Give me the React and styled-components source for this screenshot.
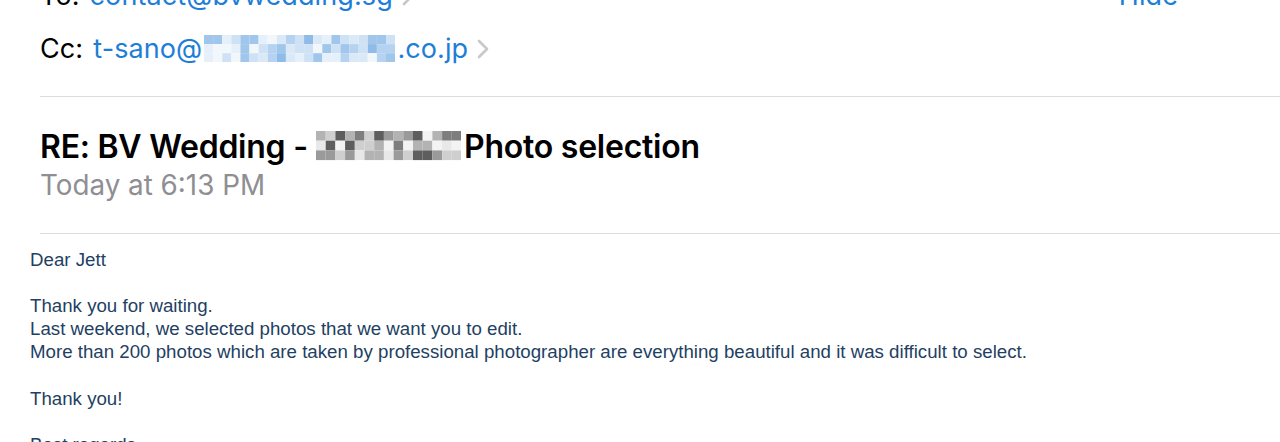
import React from "react";
import styled, { createGlobalStyle } from "styled-components";

const Global = createGlobalStyle`
  html, body { margin: 0; padding: 0; background: #ffffff; overflow: hidden; }
  body { font-family: Inter, "Noto Sans", sans-serif; }
`;

const Page = styled.div`
  width: 1280px;
  height: 442px;
  overflow: hidden;
  background: #fff;
`;

const Header = styled.div`
  margin-top: -31px;
  padding-left: 40px;
`;

const AddrRow = styled.div`
  display: flex;
  align-items: center;
  height: 53px;
  font-size: 27px;
  color: #000;
  letter-spacing: 0.1px;
`;

const Label = styled.span`
  margin-right: 10px;
`;

const Link = styled.span`
  color: #1d7ed8;
  display: inline-flex;
  align-items: center;
`;

const Chevron = styled.svg`
  margin-left: 9px;
  flex: none;
`;

const Hide = styled.span`
  margin-left: auto;
  margin-right: 102px;
  color: #1d7ed8;
`;

const Divider = styled.div`
  height: 1px;
  background: #dcdcdf;
  margin-top: ${(p) => p.$top}px;
`;

const SubjectBlock = styled.div`
  padding-top: 28px;
  padding-bottom: 29px;
`;

const Subject = styled.div`
  display: flex;
  align-items: center;
  font-size: 32px;
  font-weight: 600;
  color: #000;
  height: 42px;
  letter-spacing: -0.25px;
`;

const DateLine = styled.div`
  font-size: 27.8px;
  color: #8e8e93;
  height: 37px;
  line-height: 37px;
`;

const Body = styled.div`
  padding: 14px 0 0 30px;
  font-family: "Liberation Sans", Arial, sans-serif;
  font-size: 18.7px;
  line-height: 23.1px;
  color: #233f63;
`;

const Para = styled.p`
  margin: 0 0 23.1px 0;
`;

function Mosaic({ cols, rows, cell, colors, seed, style }) {
  const rects = [];
  let s = seed;
  for (let r = 0; r < rows; r++) {
    for (let c = 0; c < cols; c++) {
      s = (s * 9301 + 49297) % 233280;
      const idx = Math.floor((s / 233280) * colors.length);
      rects.push(
        <rect key={r + "-" + c} x={c * cell} y={r * cell} width={cell} height={cell} fill={colors[idx]} />
      );
    }
  }
  return (
    <svg width={cols * cell} height={rows * cell} style={style} viewBox={`0 0 ${cols * cell} ${rows * cell}`}>
      {rects}
    </svg>
  );
}

const ChevronIcon = () => (
  <Chevron width="12" height="20" viewBox="0 0 12 20">
    <path d="M2 2 L10 10 L2 18" fill="none" stroke="#c7c7cc" strokeWidth="2.6" strokeLinecap="round" strokeLinejoin="round" />
  </Chevron>
);

export default function App() {
  return (
    <Page>
      <Global />
      <Header>
        <AddrRow>
          <Label>To:</Label>
          <Link>contact@bvwedding.sg</Link>
          <ChevronIcon />
          <Hide>Hide</Hide>
        </AddrRow>
        <AddrRow>
          <Label>Cc:</Label>
          <Link>
            t-sano@
            <Mosaic
              cols={21}
              rows={3}
              cell={9.1}
              seed={7}
              colors={["#e6f0fa", "#cfe2f5", "#b5d3f0", "#a0c6ec", "#dbe9f7", "#8ebbe8", "#f2f7fc"]}
              style={{ margin: "0 2px 0 2px" }}
            />
            .co.jp
          </Link>
          <ChevronIcon />
        </AddrRow>
        <Divider $top={21} />
        <SubjectBlock>
          <Subject>
            RE: BV Wedding -&nbsp;
            <Mosaic
              cols={15}
              rows={3}
              cell={9.7}
              seed={3}
              colors={["#e8e8e8", "#cfcfcf", "#b3b3b3", "#9a9a9a", "#7e7e7e", "#f3f3f3", "#5e5e5e"]}
              style={{ margin: "0 3px 0 0" }}
            />
            Photo selection
          </Subject>
          <DateLine>Today at 6:13 PM</DateLine>
        </SubjectBlock>
        <Divider $top={0} />
      </Header>
      <Body>
        <Para>Dear Jett</Para>
        <Para>
          Thank you for waiting.
          <br />
          Last weekend, we selected photos that we want you to edit.
          <br />
          More than 200 photos which are taken by professional photographer are everything beautiful and it was difficult to select.
        </Para>
        <Para>Thank you!</Para>
        <Para>Best regards,</Para>
      </Body>
    </Page>
  );
}
